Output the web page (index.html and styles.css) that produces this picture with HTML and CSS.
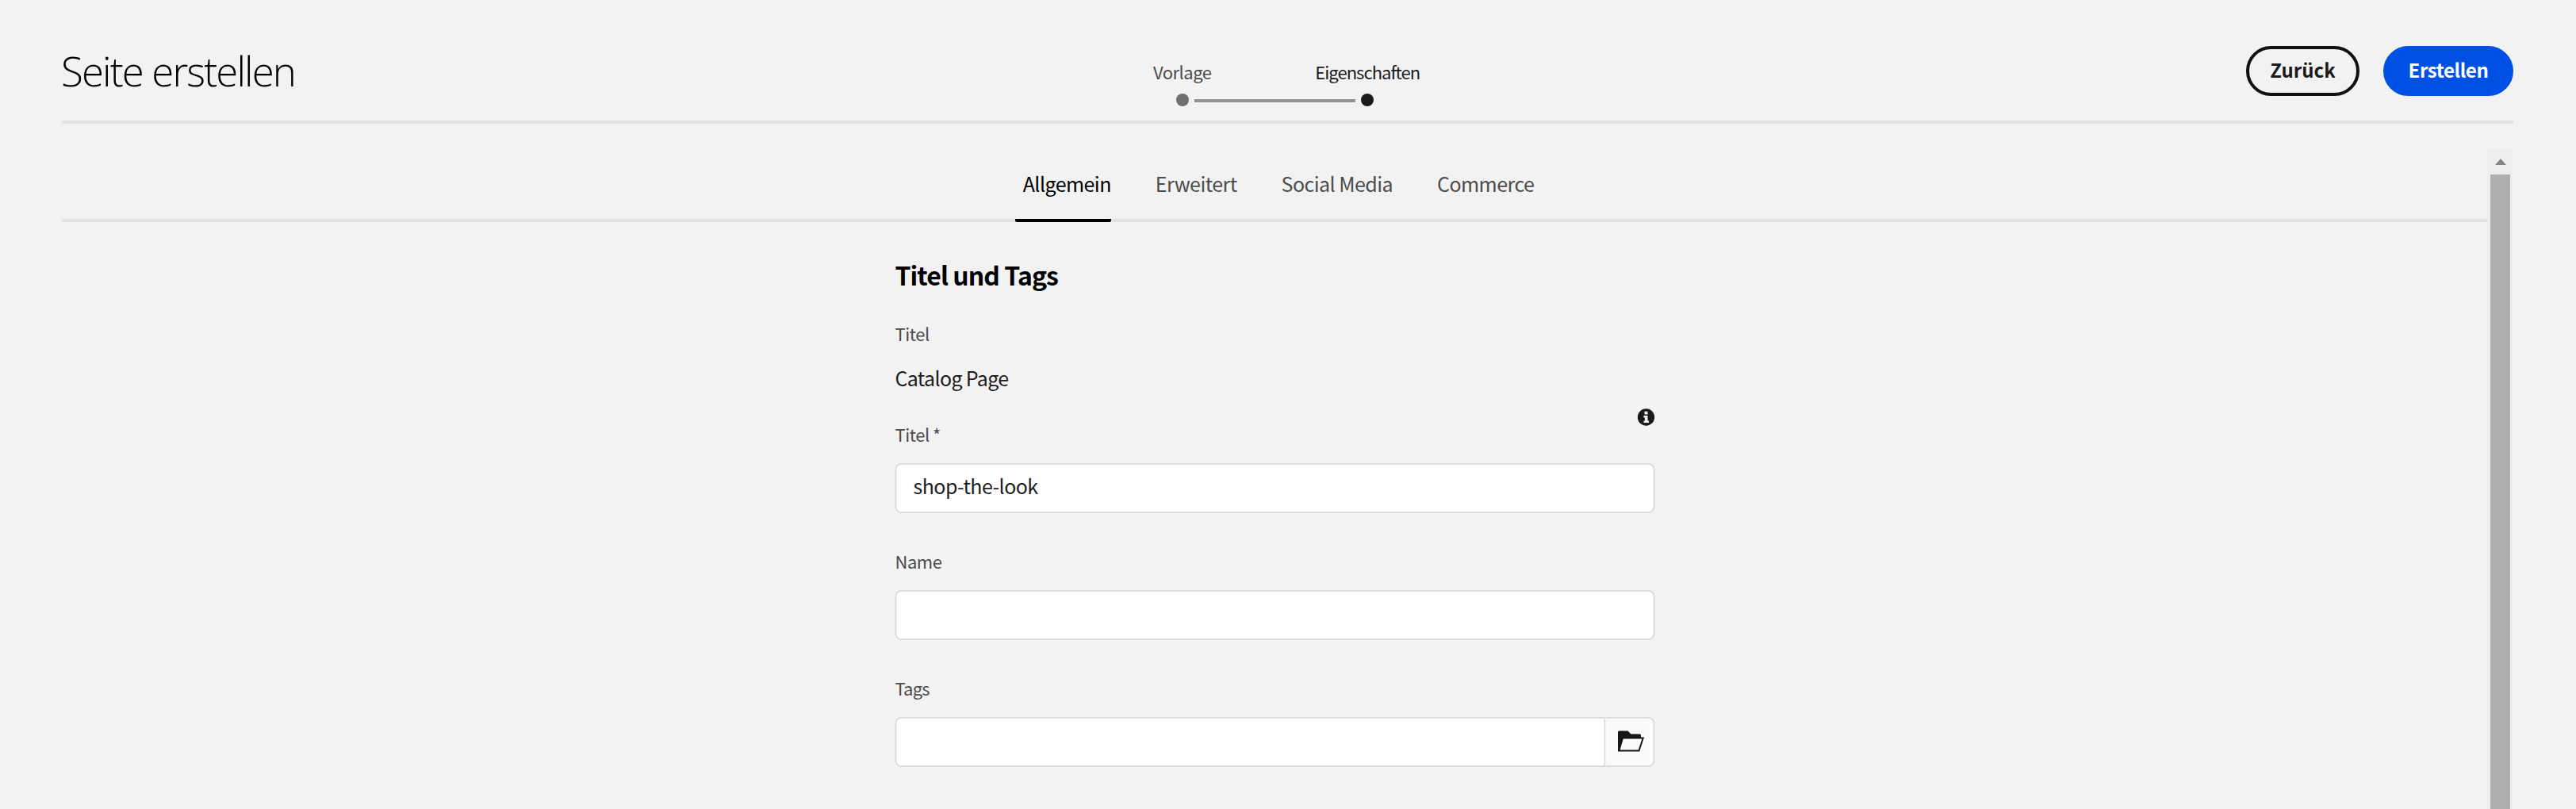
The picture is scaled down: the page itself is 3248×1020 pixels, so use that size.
FILE: index.html
```html
<!DOCTYPE html>
<html lang="de">
<head>
<meta charset="utf-8">
<title>Seite erstellen</title>
<link rel="stylesheet" href="styles.css">
</head>
<body>
<header class="header">
  <h1 class="title">Seite erstellen</h1>
  <ol class="steps">
    <li class="step done"><span class="step-label">Vorlage</span><span class="dot"></span></li>
    <li class="step current"><span class="step-label tight">Eigenschaften</span><span class="dot"></span></li>
  </ol>
  <div class="actions">
    <button class="btn secondary">Zurück</button>
    <button class="btn primary">Erstellen</button>
  </div>
</header>
<div class="body">
  <main class="panel">
    <nav class="tabs">
      <a class="tab selected">Allgemein</a>
      <a class="tab">Erweitert</a>
      <a class="tab">Social Media</a>
      <a class="tab">Commerce</a>
    </nav>
    <form class="form">
      <h2 class="section">Titel und Tags</h2>
      <div class="label">Titel</div>
      <div class="value">Catalog Page</div>
      <div class="field">
        <div class="label">Titel *</div>
        <svg class="info" viewBox="0 0 22 22"><circle cx="11" cy="11" r="10.7" fill="#1a1a1a"/><path d="M9 3.8h4v3.6H9zM8 9h5v6.6h1.5V18H8v-2.4h1.4v-4.2H8z" fill="#f2f2f2"/></svg>
        <div class="input">shop-the-look</div>
      </div>
      <div class="field">
        <div class="label">Name</div>
        <div class="input"></div>
      </div>
      <div class="field">
        <div class="label tags">Tags</div>
        <div class="picker">
          <div class="input"></div>
          <div class="browse"><svg class="folder" viewBox="0 0 34 27"><path d="M.5 26V2Q.5.5 2 .5H13L17 4.500H28Q29.500 4.500 29.500 6V9H6.500L2.500 26Z" fill="#161616"/><path d="M6.500 9.500H32.200L27 25.500H1.800Z" fill="#fafafa" stroke="#161616" stroke-width="2"/></svg></div>
        </div>
      </div>
    </form>
  </main>
  <div class="scrollbar"><div class="arrow"></div><div class="thumb"></div></div>
</div>
</body>
</html>
```
FILE: styles.css
```css
* { box-sizing: border-box; }
body {
  margin: 0;
  height: 1020px;
  overflow: hidden;
  display: flex;
  flex-direction: column;
  background: #f2f2f2;
  color: #1c1c1c;
  font-family: "Noto Sans CJK SC", "Noto Sans", sans-serif;
  font-size: 25px;
}
.header {
  flex: none;
  height: 156px;
  margin: 0 79px 0 78px;
  border-bottom: 4px solid #e2e2e2;
  display: grid;
  grid-template-columns: 1fr 467px 1fr;
}
.title {
  margin: 59px 0 0 -1px;
  font: 300 51px/60px "Open Sans", sans-serif;
  letter-spacing: -1.9px;
  color: #000;
}
.steps {
  display: flex;
  margin: 75px 0 0 -16px;
  width: 467px;
  padding: 0;
  list-style: none;
}
.step {
  position: relative;
  flex: 1;
  display: flex;
  flex-direction: column;
  align-items: center;
  gap: 13px;
  font-size: 22px;
  line-height: 30px;
  letter-spacing: -0.5px;
  color: #4b4b4b;
}
.step-label.tight { letter-spacing: -0.98px; }
.step.current { color: #1a1a1a; }
.dot {
  width: 16px;
  height: 16px;
  border-radius: 50%;
  background: #707070;
}
.current .dot { background: #1a1a1a; }
.done::after {
  content: "";
  position: absolute;
  left: 132px;
  top: 50px;
  width: 203px;
  height: 4px;
  background: #929292;
}
.actions {
  display: flex;
  justify-content: flex-end;
  gap: 30px;
  padding-top: 58px;
}
.btn {
  height: 63px;
  border-radius: 32px;
  border: 4px solid #111;
  padding: 0 0 4px;
  font: 700 24px/30px "Noto Sans CJK SC", sans-serif;
  background: transparent;
  color: #1a1a1a;
}
.secondary { width: 143px; }
.primary {
  width: 164px;
  background: #0050e3;
  border-color: #0050e3;
  color: #fff;
  letter-spacing: -0.4px;
}
.body {
  flex: 1;
  min-height: 0;
  display: flex;
  margin: 0 79px 0 78px;
}
.panel { flex: 1; }
.tabs {
  height: 124px;
  border-bottom: 4px solid #e3e3e3;
  display: flex;
  justify-content: center;
  gap: 56px;
}
.tab {
  height: 124px;
  padding-top: 60px;
  line-height: 30px;
  letter-spacing: -0.55px;
  color: #4b4b4b;
}
.selected {
  padding-left: 10px;
  color: #000;
  background: linear-gradient(#000, #000) bottom / 100% 4px no-repeat;
  border-radius: 2px;
}
.form {
  width: 958px;
  margin: 0 auto;
  padding: 46px 0 0;
  translate: 0.5px 0;
}
.section {
  margin: 0 0 39px;
  font-size: 32px;
  line-height: 40px;
  letter-spacing: -0.95px;
  color: #000;
}
.label {
  font-size: 22px;
  line-height: 30px;
  letter-spacing: -0.5px;
  color: #4b4b4b;
}
.tags { letter-spacing: -0.8px; }
.value {
  margin: 26px 0 41px;
  line-height: 30px;
  letter-spacing: -0.65px;
}
.field {
  position: relative;
  margin-bottom: 45px;
}
.input {
  height: 63px;
  margin-top: 22px;
  padding: 11px 21px;
  border: 2px solid #dcdcdc;
  border-radius: 8px;
  background: #fff;
  line-height: 30px;
  letter-spacing: -0.55px;
}
.info {
  position: absolute;
  right: 0;
  top: -17px;
  width: 22px;
  height: 22px;
}
.picker {
  display: flex;
  margin-top: 22px;
}
.picker .input {
  flex: 1;
  margin: 0;
  border-radius: 8px 0 0 8px;
}
.browse {
  width: 62px;
  border: 2px solid #dcdcdc;
  border-left: 0;
  border-radius: 0 8px 8px 0;
  background: #fafafa;
  display: flex;
  padding: 15px 0 0 15px;
}
.folder { width: 34px; height: 27px; }
.scrollbar {
  width: 33px;
  margin-top: 31px;
  background: #eeeeee;
  display: flex;
  flex-direction: column;
  align-items: center;
}
.arrow {
  margin: 13px 0 12px;
  border: 7px solid transparent;
  border-top: 0;
  border-bottom: 8px solid #858585;
}
.thumb {
  flex: 1;
  width: 25px;
  background: #afafaf;
}
```
